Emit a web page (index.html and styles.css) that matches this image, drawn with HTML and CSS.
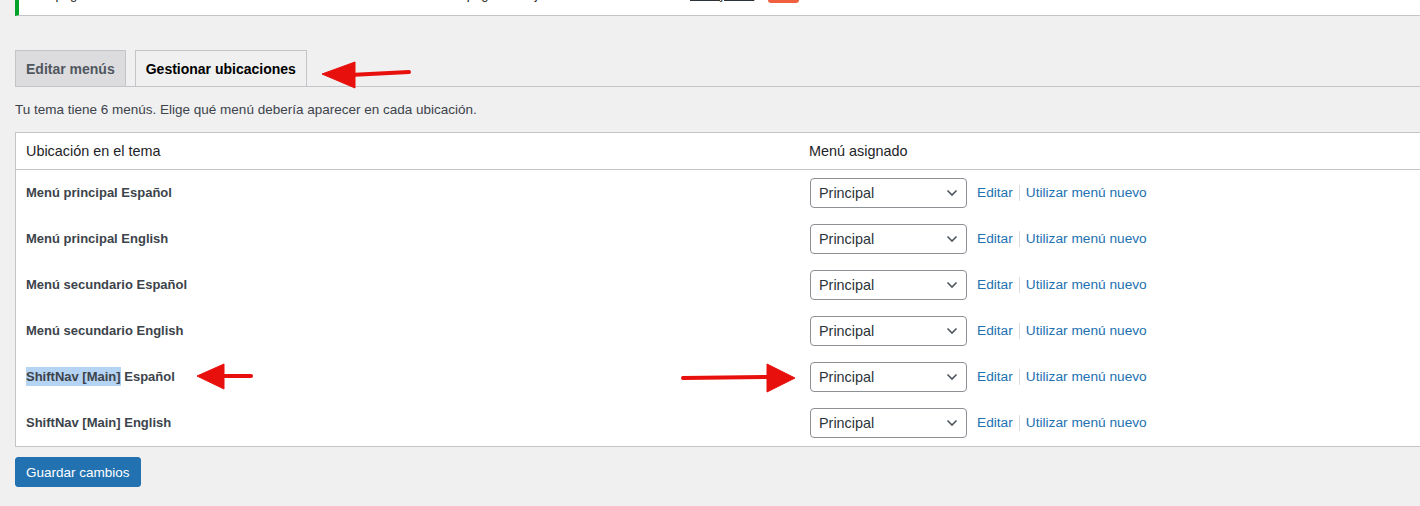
FILE: index.html
```html
<!DOCTYPE html>
<html lang="es">
<head>
    <meta charset="UTF-8">
    <title>Menús ‹ Gestionar ubicaciones</title>
    <link rel="stylesheet" href="styles.css">
</head>
<body>
    <div class="wrap">
        <!-- aviso superior (cortado por arriba) -->
        <div class="notice notice-success">
            <span class="notice-text">Las páginas de idioma están listas. Revisa los menús de cada idioma en la página de ajustes.</span>
            <a class="notice-link" href="#">Ver ajustes</a>
            <span class="notice-button"></span>
        </div>

        <nav class="nav-tab-wrapper">
            <a class="nav-tab" href="#">Editar menús</a>
            <a class="nav-tab nav-tab-active" href="#">Gestionar ubicaciones</a>
        </nav>

        <p class="description">Tu tema tiene 6 menús. Elige qué menú debería aparecer en cada ubicación.</p>

        <table class="menu-locations">
            <thead>
                <tr>
                    <th class="col-location">Ubicación en el tema</th>
                    <th>Menú asignado</th>
                </tr>
            </thead>
            <tbody>
                <tr>
                    <td class="location-title">Menú principal Español</td>
                    <td>
                        <div class="location-row">
                            <span class="select-wrap">
                                <select><option>Principal</option></select>
                                <svg class="chevron" width="12" height="8" viewBox="0 0 12 8"><path d="M1.5 1.5 L6 6 L10.5 1.5" fill="none" stroke="#50575e" stroke-width="1.6"/></svg>
                            </span>
                            <a href="#">Editar</a>
                            <a class="new-menu" href="#">Utilizar menú nuevo</a>
                        </div>
                    </td>
                </tr>
                <tr>
                    <td class="location-title">Menú principal English</td>
                    <td>
                        <div class="location-row">
                            <span class="select-wrap">
                                <select><option>Principal</option></select>
                                <svg class="chevron" width="12" height="8" viewBox="0 0 12 8"><path d="M1.5 1.5 L6 6 L10.5 1.5" fill="none" stroke="#50575e" stroke-width="1.6"/></svg>
                            </span>
                            <a href="#">Editar</a>
                            <a class="new-menu" href="#">Utilizar menú nuevo</a>
                        </div>
                    </td>
                </tr>
                <tr>
                    <td class="location-title">Menú secundario Español</td>
                    <td>
                        <div class="location-row">
                            <span class="select-wrap">
                                <select><option>Principal</option></select>
                                <svg class="chevron" width="12" height="8" viewBox="0 0 12 8"><path d="M1.5 1.5 L6 6 L10.5 1.5" fill="none" stroke="#50575e" stroke-width="1.6"/></svg>
                            </span>
                            <a href="#">Editar</a>
                            <a class="new-menu" href="#">Utilizar menú nuevo</a>
                        </div>
                    </td>
                </tr>
                <tr>
                    <td class="location-title">Menú secundario English</td>
                    <td>
                        <div class="location-row">
                            <span class="select-wrap">
                                <select><option>Principal</option></select>
                                <svg class="chevron" width="12" height="8" viewBox="0 0 12 8"><path d="M1.5 1.5 L6 6 L10.5 1.5" fill="none" stroke="#50575e" stroke-width="1.6"/></svg>
                            </span>
                            <a href="#">Editar</a>
                            <a class="new-menu" href="#">Utilizar menú nuevo</a>
                        </div>
                    </td>
                </tr>
                <tr>
                    <td class="location-title"><span class="selected">ShiftNav [Main]</span> Español</td>
                    <td>
                        <div class="location-row">
                            <span class="select-wrap">
                                <select><option>Principal</option></select>
                                <svg class="chevron" width="12" height="8" viewBox="0 0 12 8"><path d="M1.5 1.5 L6 6 L10.5 1.5" fill="none" stroke="#50575e" stroke-width="1.6"/></svg>
                            </span>
                            <a href="#">Editar</a>
                            <a class="new-menu" href="#">Utilizar menú nuevo</a>
                        </div>
                    </td>
                </tr>
                <tr>
                    <td class="location-title">ShiftNav [Main] English</td>
                    <td>
                        <div class="location-row">
                            <span class="select-wrap">
                                <select><option>Principal</option></select>
                                <svg class="chevron" width="12" height="8" viewBox="0 0 12 8"><path d="M1.5 1.5 L6 6 L10.5 1.5" fill="none" stroke="#50575e" stroke-width="1.6"/></svg>
                            </span>
                            <a href="#">Editar</a>
                            <a class="new-menu" href="#">Utilizar menú nuevo</a>
                        </div>
                    </td>
                </tr>
            </tbody>
        </table>

        <button class="button-primary">Guardar cambios</button>
    </div>

    <!-- flechas de anotación sobre la captura -->
    <svg class="annotations" width="1420" height="506" viewBox="0 0 1420 506">
        <g fill="#e8100c" stroke="#e8100c">
            <path d="M350 75 L409 72" stroke-width="4" stroke-linecap="round"/>
            <path d="M322 74 L355 62 L355 88 Z" stroke-width="1" stroke-linejoin="round"/>
            <path d="M220 376 L251 376" stroke-width="4" stroke-linecap="round"/>
            <path d="M197 376 L224 364 L224 389 Z" stroke-width="1" stroke-linejoin="round"/>
            <path d="M683 378 L770 377" stroke-width="4" stroke-linecap="round"/>
            <path d="M795 378 L767 364 L767 392 Z" stroke-width="1" stroke-linejoin="round"/>
        </g>
    </svg>
</body>
</html>
```

FILE: styles.css
```css
/* base */
body {
    margin: 0;
    background-color: #f0f0f1;
    color: #3c434a;
    font-family: "Liberation Sans", Arial, sans-serif;
    font-size: 13px;
    line-height: 1.4;
    overflow: hidden;
    position: relative;
    height: 506px;
}
a {
    color: #2271b1;
    text-decoration: none;
}
.wrap {
    padding-left: 15px;
}

/* aviso de arriba */
.notice {
    display: flex;
    align-items: center;
    box-sizing: border-box;
    height: 41px;
    margin-top: -25px;
    padding: 0 12px;
    background-color: #fff;
    border-left: 4px solid #00a32a;
    border-bottom: 1px solid #c3c4c7;
    color: #1d2327;
    font-size: 13px;
}
.notice-text {
    flex: 0 0 630px;
    white-space: nowrap;
}
.notice-link {
    flex-shrink: 0;
    margin-left: 29px;
    color: #2c3338;
    text-decoration: underline;
}
.notice-button {
    flex-shrink: 0;
    width: 31px;
    height: 26px;
    margin: 0 0 10px 14px;
    background-color: #f0603f;
    border-radius: 3px;
}

/* pestañas */
.nav-tab-wrapper {
    display: flex;
    gap: 9px;
    margin-top: 34px;
    border-bottom: 1px solid #c3c4c7;
}
.nav-tab {
    padding: 6px 10px 5px;
    border: 1px solid #c3c4c7;
    border-bottom: none;
    background-color: #dcdcde;
    color: #50575e;
    font-size: 14px;
    font-weight: 600;
    line-height: 24px;
}
.nav-tab-active {
    background-color: #f0f0f1;
    color: #000;
}

.description {
    margin: 13px 0 13px;
    color: #3c434a;
    font-size: 13.5px;
    line-height: 19px;
}

/* tabla de ubicaciones */
.menu-locations {
    width: 1566px;
    table-layout: fixed;
    border-collapse: collapse;
    background-color: #fff;
    border: 1px solid #c3c4c7;
}
.menu-locations th {
    padding: 8px 10px;
    text-align: left;
    font-weight: 400;
    font-size: 14.4px;
    line-height: 20px;
    color: #1d2327;
    border-bottom: 1px solid #c3c4c7;
}
.menu-locations .col-location {
    width: 763px;
}
.menu-locations td {
    padding: 8px 10px;
    vertical-align: middle;
}
.location-title {
    font-weight: 700;
    font-size: 13px;
    color: #3c434a;
}
.selected {
    padding: 2px 0;
    background-color: #b5d3f3;
}
.location-row {
    display: flex;
    align-items: center;
    font-size: 13.7px;
}
.select-wrap {
    position: relative;
    display: inline-block;
    margin-left: 1px;
    margin-right: 10px;
}
.select-wrap select {
    appearance: none;
    -webkit-appearance: none;
    box-sizing: border-box;
    width: 157px;
    height: 30px;
    padding: 0 24px 0 8px;
    border: 1px solid #8c8f94;
    border-radius: 4px;
    background-color: #fff;
    color: #2c3338;
    font-family: "Liberation Sans", Arial, sans-serif;
    font-size: 14.4px;
}
.chevron {
    position: absolute;
    right: 9px;
    top: 11px;
}
.new-menu {
    margin-left: 6px;
    padding-left: 6px;
    border-left: 1px solid #dcdcde;
    line-height: 16px;
}

/* botón guardar */
.button-primary {
    margin-top: 10px;
    height: 30px;
    padding: 0 10px;
    background-color: #2271b1;
    border: 1px solid #2271b1;
    border-radius: 3px;
    color: #fff;
    font-family: "Liberation Sans", Arial, sans-serif;
    font-size: 13.5px;
    cursor: pointer;
}

/* flechas rojas */
.annotations {
    position: absolute;
    left: 0;
    top: 0;
    pointer-events: none;
}
```
